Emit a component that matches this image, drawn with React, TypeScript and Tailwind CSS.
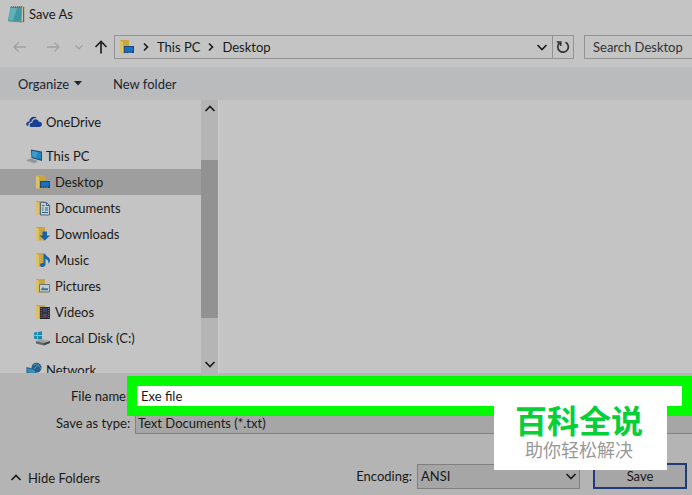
import type { ReactNode } from 'react'

type FolderKind = 'desktop' | 'documents' | 'downloads' | 'music' | 'pictures' | 'videos'

function Chevron({ className = '', direction = 'down' }: { className?: string; direction?: 'up' | 'down' | 'right' }) {
  const paths = {
    up: 'M1.5 8 6 3.5 10.5 8',
    down: 'M1.5 4 6 8.5 10.5 4',
    right: 'M4 2.5 7.5 6 4 9.5',
  }
  return (
    <svg viewBox="0 0 12 12" className={`h-3 w-3 shrink-0 ${className}`} fill="none" stroke="currentColor" strokeWidth="1.6">
      <path d={paths[direction]} />
    </svg>
  )
}

function Arrow({ direction }: { direction: 'left' | 'right' | 'up' }) {
  const paths = {
    left: 'M14 8H2M6.5 3.5 2 8l4.5 4.5',
    right: 'M2 8h12M9.5 3.5 14 8l-4.5 4.5',
    up: 'M8 14.5V2.5M2.5 8 8 2.5 13.5 8',
  }
  return (
    <svg viewBox="0 0 16 16" className="h-4 w-4" fill="none" stroke="currentColor" strokeWidth={direction === 'up' ? 1.7 : 1.3}>
      <path d={paths[direction]} />
    </svg>
  )
}

function NotepadIcon() {
  return (
    <svg viewBox="0 0 18 18" className="h-[18px] w-[18px] shrink-0">
      <path d="M4 2 16.500 1.500l.5 15-2 1L1.500 16.500z" fill="#8f855c" />
      <path d="M3.500 2H15L14.500 16.500 1 15.500z" fill="#3f98a4" />
      <path d="M3.800 3H10L6 15.500 1.500 15z" fill="#62b0b8" />
      <path d="M15 2h1.500v14.500L14.500 16.500z" fill="#c9c4a8" />
      <path d="M16.700 2v15" stroke="#544c34" strokeWidth=".9" />
      <path d="M4 2h11" stroke="#4c5f62" strokeWidth="1.500" strokeDasharray="1 1" />
    </svg>
  )
}

const folderBadges: Record<FolderKind, ReactNode> = {
  desktop: (
    <>
      <path d="M5 7h10v7H5z" fill="#17497a" />
      <path d="M6 8h8v4.300H6z" fill="#1670c4" />
      <path d="M6.500 13.200h1.500m1 0h1.500m1 0h1.500" stroke="#7fa5c4" strokeWidth=".7" />
    </>
  ),
  documents: (
    <>
      <path d="M5.500 2.500h6l3 3v9.500h-9z" fill="#c3ced5" stroke="#50687a" />
      <path d="M11.500 2.500v3h3M7 5.500h2.500M7 8h1.500m1.500 0h3M7 10h1.500m1.500 0h3M7 12.500h6" fill="none" stroke="#2f648c" />
    </>
  ),
  downloads: <path d="M7.500 5.500h4.500v4h3l-5.200 5-5.300-5h3z" fill="#1762a7" />,
  music: (
    <path
      d="M8.500 2h1.800c.2 2.300 4.700 3 4.700 6.200 0 1.500-.6 2.700-1.600 3.600.4-2.500-.7-4.300-2.900-5v5.700c0 3-5.500 3.400-5.500.7 0-1.900 1.800-2.500 3.500-2.200z"
      fill="#1768a6"
    />
  ),
  pictures: (
    <>
      <path d="M4.500 6.500h10v7.500h-10z" fill="#c4ced3" stroke="#66747c" />
      <path d="M6 11.200 8.500 8.500v1.700h4.500v2H6z" fill="#45728c" />
    </>
  ),
  videos: (
    <>
      <path d="M5 3h10v12H5z" fill="#25232b" />
      <path d="M7.500 4h5v4.500h-5z" fill="#37466a" />
      <path d="M7.500 9.500h5v4.500h-5z" fill="#574758" />
      <path d="M6.200 4v11M13.800 4v11" stroke="#a1a1a1" strokeDasharray="1 1.200" />
    </>
  ),
}

function FolderIcon({ kind }: { kind: FolderKind }) {
  return (
    <svg viewBox="0 0 16 16" className="h-4 w-4 shrink-0">
      <path d="M1 1h9v13.500H3L1 14z" fill="#c8a743" />
      <path d="M1 1.500l3 1.500v12L1 14z" fill="#ddc168" />
      {folderBadges[kind]}
    </svg>
  )
}

function CloudIcon() {
  return (
    <svg viewBox="0 0 16 16" className="h-4 w-4 shrink-0" fill="#173f94">
      <path d="M.7 11.800C-.7 9 1.500 7.300 3.300 7.500 3.500 3.500 8 1.300 10.900 4 7.500 3.700 5.500 6 5.400 8c-2.500.3-3.500 1.900-2.800 3.800z" />
      <path d="M4 12.700C2.900 10 4.500 8.800 6.200 8.800 6.500 4.300 12 4 12.900 7.700c3.900-.3 4 5 .6 5.200H5.500z" />
    </svg>
  )
}

function ComputerIcon() {
  return (
    <svg viewBox="0 0 16 16" className="h-4 w-4 shrink-0">
      <path d="M0 12.300 5 10.500l7 2.500-4 2.500z" fill="#8f959a" />
      <path d="M0 12.300 8 14.500v1L.5 13z" fill="#a7acb0" />
      <path d="M5 1.500 16 3.500v9.500L5.500 10z" fill="#204f70" />
      <path d="M6 2.900 15 4.500v7L6.400 9z" fill="#1f86bf" />
      <path d="M6 2.900 12 4l-2 6-3.600-1z" fill="#3a9bce" />
    </svg>
  )
}

function DiskIcon() {
  return (
    <svg viewBox="0 0 18 16" className="h-4 w-[18px] shrink-0">
      <path d="M1 2.500 4.300 2v3.300H1zM5 1.900 9 1.300v4H5zM1 6h3.300v3.200L1 8.700zM5 6h4v3.800l-4-.6z" fill="#168ab0" />
      <path d="M3 11 8 9l9 2-6 2.500z" fill="#a1a5a7" />
      <path d="m3 11 8 2v2.500l-8-2z" fill="#62676a" />
      <path d="m11 13 6-2v2l-6 2.500z" fill="#3e4447" />
    </svg>
  )
}

function NetworkIcon() {
  return (
    <svg viewBox="0 0 16 16" className="h-4 w-4 shrink-0">
      <circle cx="10.500" cy="5.800" r="5" fill="#255f87" />
      <path d="M8 3c2-2 4 1 2 2s-2 3-4 3M12 2c0 3 3 3 3 5" fill="none" stroke="#649bb1" />
      <path d="M.5 5 10 7.500v6L.5 11.500z" fill="#1f5f8c" />
      <path d="M1.500 6.300 9 8.300v3.700l-7.500-1.700z" fill="#3a8fb8" />
    </svg>
  )
}

const places: { label: string; kind: FolderKind; selected?: boolean }[] = [
  { label: 'Desktop', kind: 'desktop', selected: true },
  { label: 'Documents', kind: 'documents' },
  { label: 'Downloads', kind: 'downloads' },
  { label: 'Music', kind: 'music' },
  { label: 'Pictures', kind: 'pictures' },
  { label: 'Videos', kind: 'videos' },
]

function TreeItem({ icon, label, className }: { icon: ReactNode; label: string; className: string }) {
  return (
    <button type="button" className={`flex h-[26px] w-full shrink-0 items-center gap-1 text-left ${className}`}>
      {icon}
      <span>{label}</span>
    </button>
  )
}

function FolderTree() {
  return (
    <nav aria-label="Folders" className="flex w-[201px] shrink-0 flex-col overflow-hidden pt-[9px]">
      <TreeItem icon={<CloudIcon />} label="OneDrive" className="pl-[26px]" />
      <TreeItem icon={<ComputerIcon />} label="This PC" className="mt-2 pl-[26px]" />
      {places.map(({ label, kind, selected }) => (
        <TreeItem
          key={label}
          icon={<FolderIcon kind={kind} />}
          label={label}
          className={selected ? 'bg-[#9e9e9e] pl-[35px]' : 'pl-[35px]'}
        />
      ))}
      <TreeItem icon={<DiskIcon />} label="Local Disk (C:)" className="pl-[33px]" />
      <TreeItem icon={<NetworkIcon />} label="Network" className="mt-[6px] pl-[26px]" />
    </nav>
  )
}

function ScrollBar() {
  return (
    <div className="flex w-[17px] shrink-0 flex-col bg-[#b5b5b5]">
      <button type="button" aria-label="Scroll up" className="flex h-[18px] items-center justify-center">
        <Chevron direction="up" />
      </button>
      <div className="flex flex-1 flex-col">
        <div className="grow-[42]" />
        <div className="grow-[158] bg-[#929292]" />
        <div className="grow-[37]" />
      </div>
      <button type="button" aria-label="Scroll down" className="flex h-[18px] items-center justify-center">
        <Chevron />
      </button>
    </div>
  )
}

function NavigationBar() {
  return (
    <div className="flex h-10 items-center">
      <div className="flex w-[114px] shrink-0 items-center pl-3 text-[#a0a0a0]">
        <button type="button" aria-label="Back">
          <Arrow direction="left" />
        </button>
        <button type="button" aria-label="Forward" className="ml-[17px]">
          <Arrow direction="right" />
        </button>
        <button type="button" aria-label="Recent locations" className="ml-3">
          <Chevron className="scale-75" />
        </button>
        <button type="button" aria-label="Up" className="ml-2 text-[#222]">
          <Arrow direction="up" />
        </button>
      </div>
      <div className="flex h-6 min-w-0 flex-1 items-center border border-[#939393]">
        <div className="flex min-w-0 flex-1 items-center pl-1">
          <FolderIcon kind="desktop" />
          <Chevron direction="right" className="mx-[5px]" />
          <button type="button">This PC</button>
          <Chevron direction="right" className="mx-[5px]" />
          <button type="button">Desktop</button>
        </div>
        <button type="button" aria-label="Previous locations" className="flex w-5 shrink-0 justify-center">
          <Chevron />
        </button>
        <button type="button" aria-label="Refresh" className="flex h-full w-[21px] shrink-0 items-center justify-center border-l border-[#939393]">
          <svg viewBox="0 0 16 16" className="h-4 w-4" fill="none" stroke="#333" strokeWidth="1.700">
            <path d="M10.500 3.200A5.300 5.300 0 1 1 4.500 4M1.700 3h4v4" />
          </svg>
        </button>
      </div>
      <input
        type="text"
        aria-label="Search Desktop"
        placeholder="Search Desktop"
        className="ml-[10px] h-6 w-[108px] shrink-0 border border-r-0 border-[#939393] bg-transparent pl-2 outline-none placeholder:text-[#333]"
      />
    </div>
  )
}

function Footer() {
  return (
    <footer className="shrink-0 bg-[#b4b4b4] pt-[3px]">
      <div className="relative z-10 flex items-center">
        <label htmlFor="file-name" className="w-[127px] shrink-0 pl-[71px] whitespace-nowrap">
          File name:
        </label>
        <input
          id="file-name"
          defaultValue="Exe file"
          className="relative h-10 min-w-0 flex-1 border-10 border-[#00fa00] bg-white pl-1 outline-none"
        />
      </div>
      <div className="-mt-[5px] flex items-center">
        <label htmlFor="file-type" className="w-[135px] shrink-0 pl-14 whitespace-nowrap">
          Save as type:
        </label>
        <select id="file-type" className="h-[23px] min-w-0 flex-1 appearance-none border border-r-0 border-[#828282] bg-[#a6a6a6] pl-[2px]">
          <option>Text Documents (*.txt)</option>
        </select>
      </div>
      <div className="flex items-center pt-[29px] pr-[5px] pb-[6px]">
        <button type="button" className="flex items-center gap-[6px] pt-1 pl-[10px]">
          <Chevron direction="up" />
          Hide Folders
        </button>
        <label htmlFor="encoding" className="mr-[5px] ml-auto">
          Encoding:
        </label>
        <div className="grid w-[163px] items-center">
          <select id="encoding" className="col-start-1 row-start-1 h-[25px] appearance-none border border-[#808080] bg-[#a6a6a6] pl-[3px]">
            <option>ANSI</option>
          </select>
          <Chevron className="pointer-events-none col-start-1 row-start-1 mr-[3px] justify-self-end" />
        </div>
        <button type="button" className="ml-[13px] h-[26px] w-[94px] border-2 border-[#203b7c] bg-[#a6a6a6]">
          Save
        </button>
      </div>
    </footer>
  )
}

export default function App() {
  return (
    <div className="relative flex h-screen flex-col overflow-hidden bg-[#c4c4c4] font-['Lato','Noto_Sans_CJK_SC',sans-serif] text-[13px] leading-[18px] text-[#191919]">
      <header className="flex h-[27px] shrink-0 items-center gap-1 pl-[7px]">
        <NotepadIcon />
        <h1>Save As</h1>
      </header>
      <NavigationBar />
      <div className="flex h-[33px] shrink-0 items-center bg-[#b9bbbd] text-[#1d2432]">
        <button type="button" className="flex items-center gap-[5px] pl-[18px]">
          Organize
          <svg viewBox="0 0 8 5" className="h-[5px] w-2" fill="currentColor">
            <path d="M0 0h8L4 4.500z" />
          </svg>
        </button>
        <button type="button" className="ml-[31px]">New folder</button>
      </div>
      <main className="flex min-h-0 flex-1">
        <FolderTree />
        <ScrollBar />
        <div className="flex-1 border-l border-[#cdcdcd]" />
      </main>
      <Footer />
      <aside className="absolute right-[25px] bottom-[25px] z-20 flex h-[84px] w-[173px] flex-col items-center bg-white pt-[15px] pr-[3px] font-['Noto_Sans_CJK_SC',sans-serif]">
        <strong className="text-[32px] leading-9 font-bold text-[#08ce38]">百科全说</strong>
        <span className="text-lg leading-6 text-[#999]">助你轻松解决</span>
      </aside>
    </div>
  )
}
